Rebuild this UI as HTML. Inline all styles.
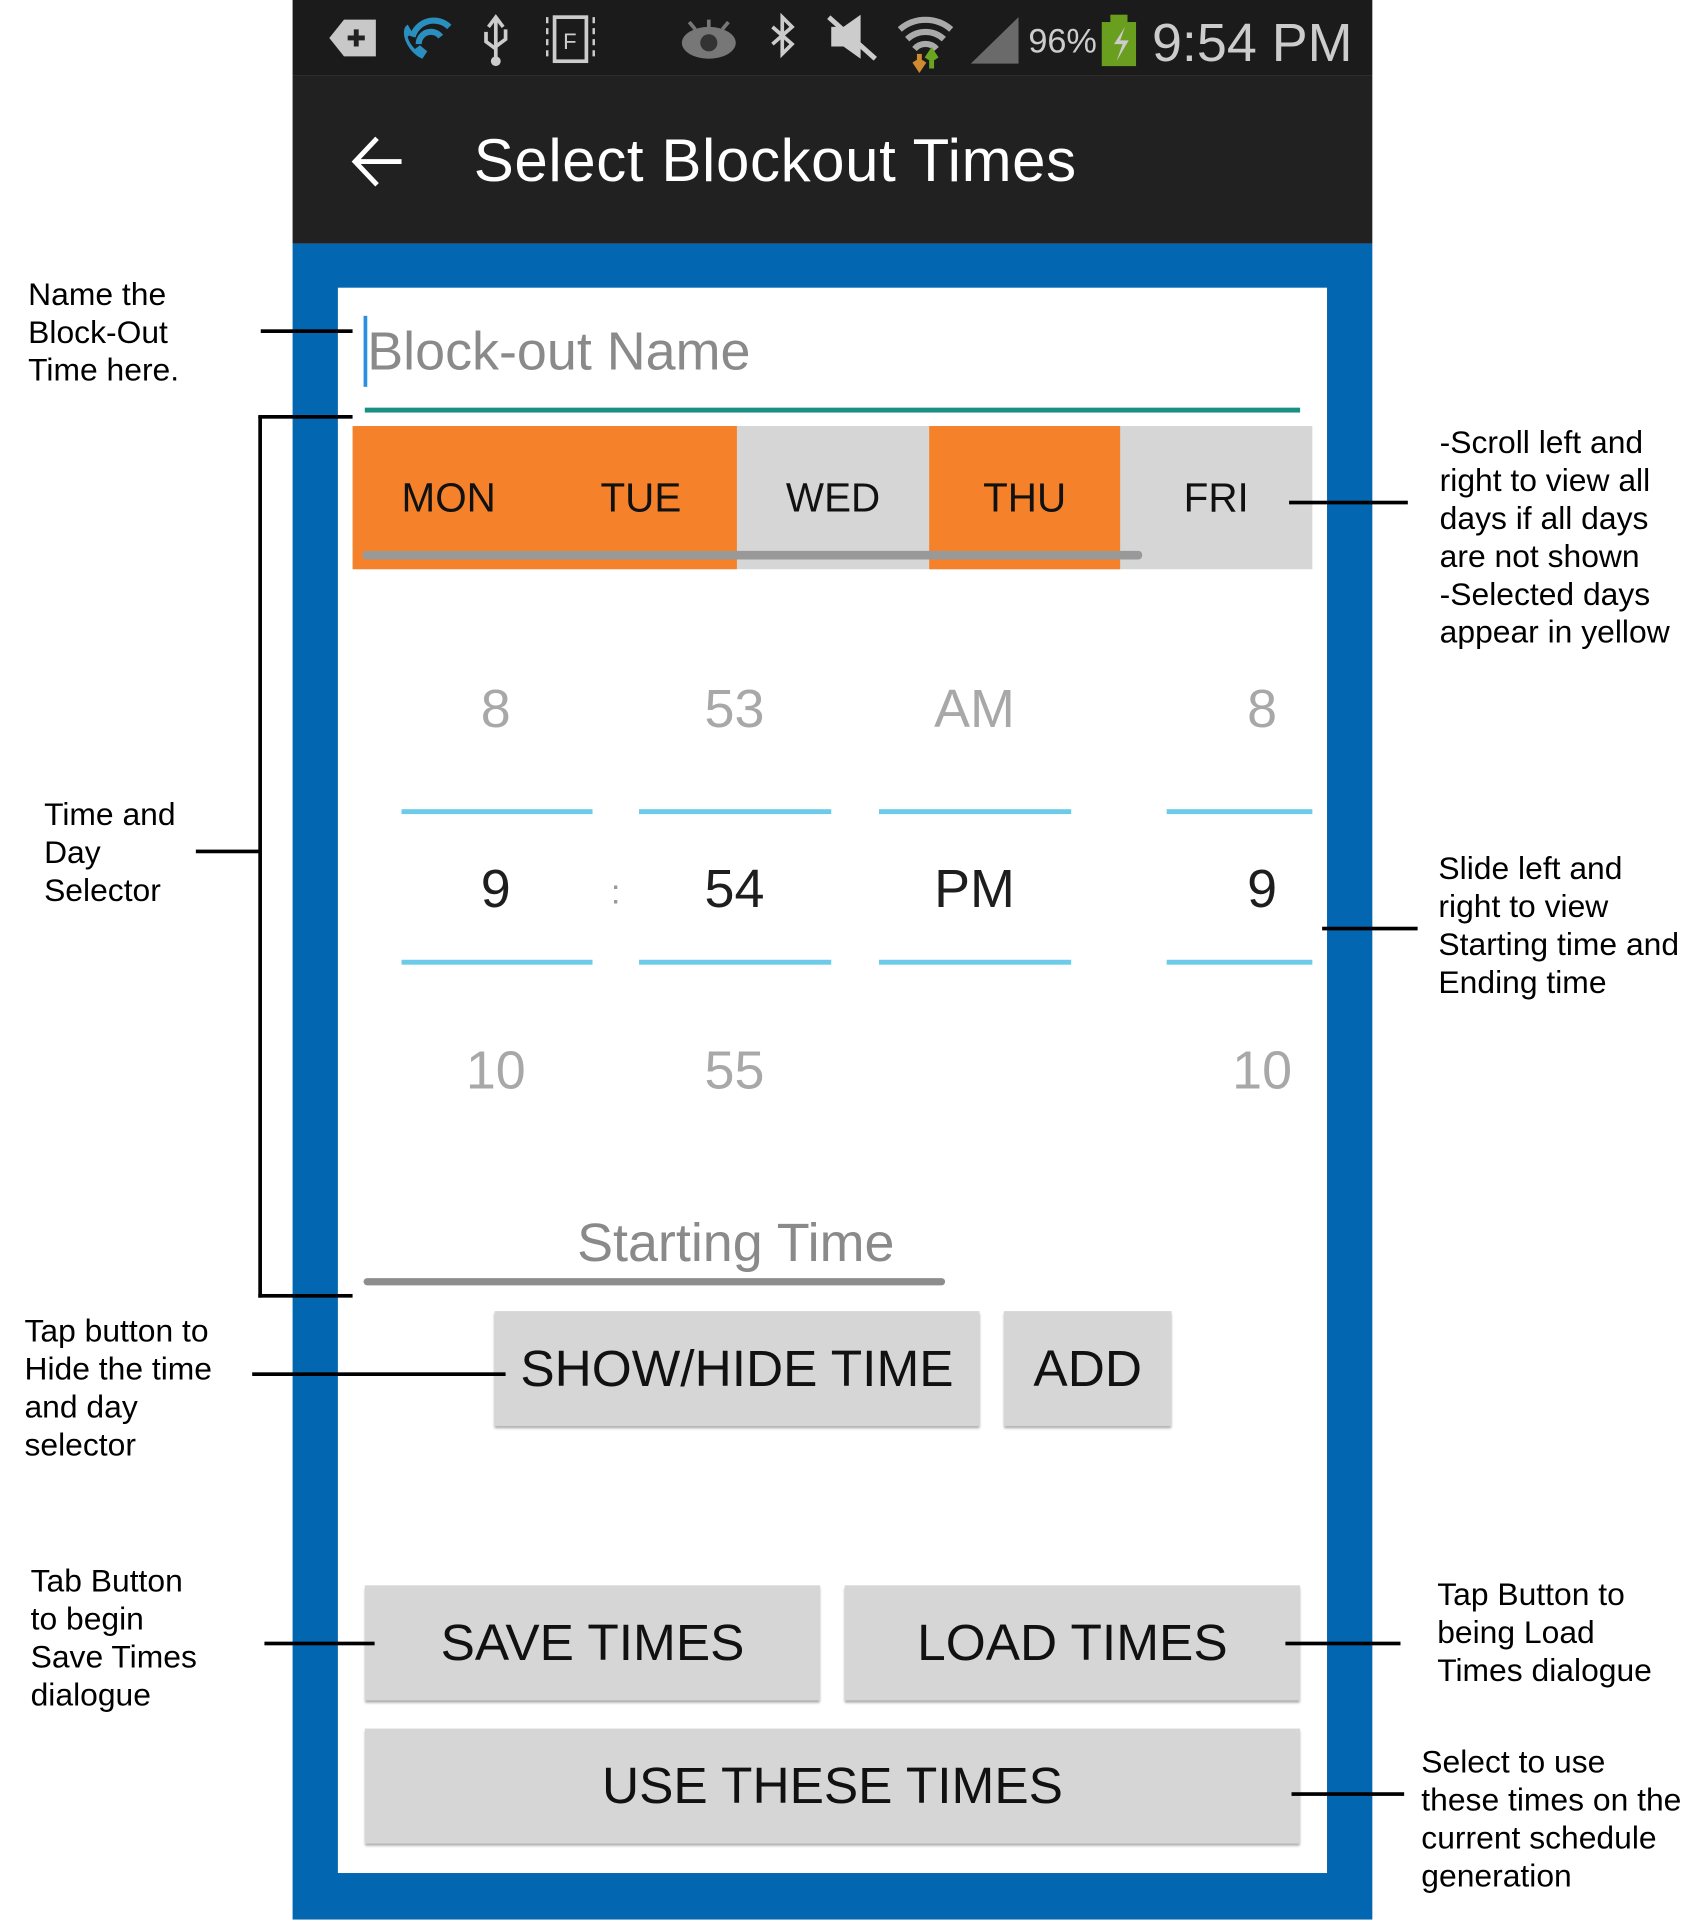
<!DOCTYPE html>
<html><head><meta charset="utf-8"><style>
html,body{margin:0;padding:0;background:#fff;width:1682px;height:1920px;overflow:hidden}
#s{position:absolute;left:0;top:0;width:1374px;height:1568px;transform:scale(1.2242);transform-origin:0 0;font-family:"Liberation Sans",Arial,sans-serif}
.a{position:absolute}
.ann{position:absolute;font-size:26px;line-height:31px;color:#000;white-space:nowrap}
.h{position:absolute;height:3px;background:#000}
.v{position:absolute;width:3px;background:#000}
.day{position:absolute;top:348px;height:117px;font-size:33px;color:#111;display:flex;align-items:center;justify-content:center}
.n{position:absolute;width:160px;text-align:center;font-size:44px;transform:translateY(-50%)}
.g{color:#a8a8a8}.d{color:#1e1e1e}
.bl{position:absolute;height:4px;background:#6ccbe9}
.btn{position:absolute;background:#d6d6d6;box-shadow:0 2px 2px rgba(0,0,0,.35);display:flex;align-items:center;justify-content:center;font-size:42px;color:#111;white-space:nowrap}
</style></head><body><div id="s">
<div class="a" style="left:239px;top:0;width:882px;height:62px;background:#1b1b1b"></div>
<div class="a" style="left:239px;top:62px;width:882px;height:137px;background:#212121"></div>
<svg class="a" style="left:239px;top:0" width="882" height="62">
<path d="M30 31 L42 16 H68 V46 H42 Z" fill="#c8c8c8"/><path d="M52 24v14M45 31h14" stroke="#222" stroke-width="4"/>
<path d="M98 30a18 18 0 0 1 30 -8M103 36a10 10 0 0 1 18 -6" stroke="#2a8fbf" stroke-width="5" fill="none"/><path d="M92 22c-4 8 4 22 14 26l4-6-6-5-4 3c-3-3-5-6-6-10l4-3-4-7z" fill="#2a8fbf"/>
<path d="M166 14v34M160 22l6-8 6 8M158 26v8l8 6M174 24v8l-8 6" stroke="#ccc" stroke-width="3" fill="none"/><circle cx="166" cy="50" r="4" fill="#ccc"/>
<rect x="214" y="14" width="26" height="36" fill="none" stroke="#ccc" stroke-width="3"/><path d="M208 14v36M246 14v36" stroke="#ccc" stroke-width="2" stroke-dasharray="5 4"/><text x="221" y="40" font-size="18" fill="#ccc" font-family="Liberation Sans">F</text>
<ellipse cx="340" cy="35" rx="22" ry="13" fill="#777"/><circle cx="340" cy="35" r="7" fill="#333"/><path d="M340 16v8M324 18l5 6M356 18l-5 6" stroke="#777" stroke-width="3"/>
<path d="M392 22l16 14-8 8V14l8 8-16 14" stroke="#ccc" stroke-width="3" fill="none"/>
<path d="M440 22h10l14-10v36l-14-10h-10z" fill="#ccc"/><path d="M438 14l38 34" stroke="#ccc" stroke-width="4"/>
<path d="M496 24a32 32 0 0 1 42 0M502 32a22 22 0 0 1 30 0M508 40a12 12 0 0 1 18 0" stroke="#aaa" stroke-width="5" fill="none"/><path d="M512 44v12M508 50l4 6 4-6" stroke="#d08a30" stroke-width="4" fill="none"/><path d="M522 56v-12M518 48l4-6 4 6" stroke="#6aa520" stroke-width="4" fill="none"/>
<path d="M554 52 L593 14 V52 Z" fill="#6a6a6a"/>
<rect x="661" y="18" width="28" height="36" fill="#6a9e1f"/><rect x="668" y="12" width="14" height="7" fill="#6a9e1f"/><path d="M680 22l-9 14h7l-5 14 10-17h-7z" fill="#ccc"/>
<text x="601" y="43" font-size="28" fill="#ccc" font-family="Liberation Sans">96%</text>
<text x="702" y="50" font-size="44" fill="#ccc" font-family="Liberation Sans">9:54 PM</text>
</svg>
<svg class="a" style="left:286px;top:110px" width="46" height="44"><path d="M4 22H42M22 3L4 22l18 19" stroke="#fff" stroke-width="4" fill="none"/></svg>
<div class="a" style="left:387px;top:104px;font-size:49px;letter-spacing:0.5px;color:#fff;line-height:56px">Select Blockout Times</div>
<div class="a" style="left:239px;top:199px;width:882px;height:1369px;background:#0266b1"></div>
<div class="a" style="left:276px;top:235px;width:808px;height:1295px;background:#fff"></div>
<div class="a" style="left:297px;top:258px;width:3px;height:58px;background:#2a8fe0"></div>
<div class="a" style="left:300px;top:262px;font-size:44px;color:#8a8a8a;line-height:52px">Block-out Name</div>
<div class="a" style="left:298px;top:333px;width:764px;height:4px;background:#1a8f84"></div>
<div class="a" style="left:288px;top:348px;width:314px;height:117px;background:#f5822a"></div>
<div class="a" style="left:602px;top:348px;width:470px;height:117px;background:#d6d6d6"></div>
<div class="a" style="left:759px;top:348px;width:156px;height:117px;background:#f5822a"></div>
<div class="day" style="left:288px;width:157px">MON</div>
<div class="day" style="left:445px;width:157px">TUE</div>
<div class="day" style="left:602px;width:157px">WED</div>
<div class="day" style="left:759px;width:156px">THU</div>
<div class="day" style="left:915px;width:157px">FRI</div>
<div class="a" style="left:296px;top:450px;width:637px;height:7px;background:#999;border-radius:3px"></div>
<div class="n g" style="left:325px;top:580px">8</div><div class="n g" style="left:520px;top:580px">53</div><div class="n g" style="left:716px;top:580px">AM</div><div class="n g" style="left:951px;top:580px">8</div>
<div class="n d" style="left:325px;top:727px">9</div><div class="n d" style="left:520px;top:727px">54</div><div class="n d" style="left:716px;top:727px">PM</div><div class="n d" style="left:951px;top:727px">9</div>
<div class="n g" style="left:325px;top:875px">10</div><div class="n g" style="left:520px;top:875px">55</div><div class="n g" style="left:951px;top:875px">10</div>
<div class="a" style="left:499px;top:713px;font-size:28px;color:#999">:</div>
<div class="bl" style="left:328px;top:661px;width:156px"></div><div class="bl" style="left:522px;top:661px;width:157px"></div><div class="bl" style="left:718px;top:661px;width:157px"></div><div class="bl" style="left:953px;top:661px;width:119px"></div>
<div class="bl" style="left:328px;top:784px;width:156px"></div><div class="bl" style="left:522px;top:784px;width:157px"></div><div class="bl" style="left:718px;top:784px;width:157px"></div><div class="bl" style="left:953px;top:784px;width:119px"></div>
<div class="a" style="left:297px;top:990px;width:608px;text-align:center;font-size:44px;color:#8a8a8a;line-height:52px">Starting Time</div>
<div class="a" style="left:297px;top:1044px;width:475px;height:6px;background:#8d8d8d;border-radius:3px"></div>
<div class="btn" style="left:404px;top:1071px;width:396px;height:94px">SHOW/HIDE TIME</div>
<div class="btn" style="left:820px;top:1071px;width:137px;height:94px">ADD</div>
<div class="btn" style="left:298px;top:1295px;width:372px;height:94px">SAVE TIMES</div>
<div class="btn" style="left:690px;top:1295px;width:372px;height:94px">LOAD TIMES</div>
<div class="btn" style="left:298px;top:1412px;width:764px;height:94px">USE THESE TIMES</div>
<div class="ann" style="left:23px;top:225px">Name the<br>Block-Out<br>Time here.</div>
<div class="h" style="left:213px;top:269px;width:75px"></div>
<div class="v" style="left:211px;top:340px;height:720px"></div>
<div class="h" style="left:211px;top:339px;width:77px"></div>
<div class="h" style="left:211px;top:1057px;width:77px"></div>
<div class="h" style="left:160px;top:694px;width:53px"></div>
<div class="ann" style="left:36px;top:650px">Time and<br>Day<br>Selector</div>
<div class="ann" style="left:20px;top:1072px">Tap button to<br>Hide the time<br>and day<br>selector</div>
<div class="h" style="left:206px;top:1121px;width:207px"></div>
<div class="ann" style="left:25px;top:1276px">Tab Button<br>to begin<br>Save Times<br>dialogue</div>
<div class="h" style="left:216px;top:1341px;width:90px"></div>
<div class="ann" style="left:1176px;top:346px">-Scroll left and<br>right to view all<br>days if all days<br>are not shown<br>-Selected days<br>appear in yellow</div>
<div class="h" style="left:1053px;top:409px;width:97px"></div>
<div class="ann" style="left:1175px;top:694px">Slide left and<br>right to view<br>Starting time and<br>Ending time</div>
<div class="h" style="left:1080px;top:757px;width:78px"></div>
<div class="ann" style="left:1174px;top:1287px">Tap Button to<br>being Load<br>Times dialogue</div>
<div class="h" style="left:1050px;top:1341px;width:94px"></div>
<div class="ann" style="left:1161px;top:1424px">Select to use<br>these times on the<br>current schedule<br>generation</div>
<div class="h" style="left:1055px;top:1464px;width:92px"></div>
</div></body></html>
